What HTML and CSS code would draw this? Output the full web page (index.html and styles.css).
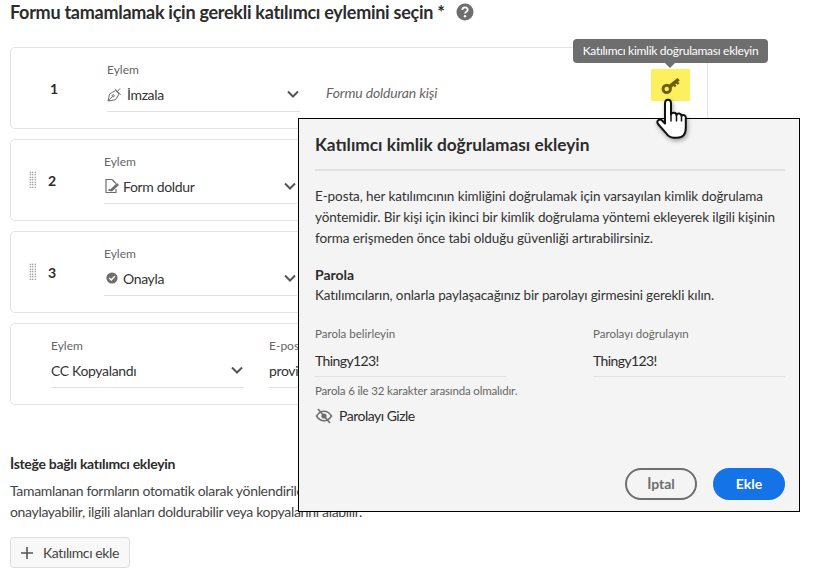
FILE: index.html
```html
<!DOCTYPE html>
<html lang="en">

<head>
    <meta charset="UTF-8">
    <meta name="viewport" content="width=device-width, initial-scale=1.0">
    <title>Katılımcı eylemi</title>
    <link rel="stylesheet" href="styles.css">
</head>

<body>
    <div class="page">
        <div class="title-row">
            <h1>Formu tamamlamak için gerekli katılımcı eylemini seçin *</h1>
            <svg class="help" viewBox="0 0 18 18" width="18" height="18">
                <circle cx="9" cy="9" r="8.5" fill="#6e6e6e" />
                <path d="M6.3 7a2.7 2.6 0 0 1 5.4 0c0 1.8-2.7 1.8-2.7 3.6" fill="none" stroke="#fff" stroke-width="1.8" />
                <circle cx="9" cy="13.3" r="1.2" fill="#fff" />
            </svg>
        </div>

        <div class="card card-first">
            <span class="num">1</span>
            <div class="field">
                <label>Eylem</label>
                <div class="select">
                    <svg class="act-icon" viewBox="0 0 16 16" width="16" height="16">
                        <path d="M1 15 2.600 8 8.500 4.500l3.500 3.600-3.400 5.600zM1 15l4.300-4.300M8 2.800l5.700 5.900M10.500 5.500 13 2.500" fill="none" stroke="#6e6e6e" stroke-width="1" />
                        <circle cx="6.200" cy="9.800" r="1.100" fill="none" stroke="#6e6e6e" />
                    </svg>
                    <span class="select-text">İmzala</span>
                    <svg class="chev" viewBox="0 0 12 8" width="12" height="8"><path d="M1 1.5 6 6.5l5-5" fill="none" stroke="#555" stroke-width="2" /></svg>
                </div>
            </div>
            <em class="who">Formu dolduran kişi</em>
        </div>

        <div class="card">
            <span class="grip"></span>
            <span class="num">2</span>
            <div class="field">
                <label>Eylem</label>
                <div class="select">
                    <svg class="act-icon" viewBox="0 0 16 16" width="16" height="16">
                        <path d="M8 1.5H2v13h10V11M8 1.5l4 4" fill="none" stroke="#6e6e6e" stroke-width="1.2" />
                        <path d="M4 12.5c1-2 1.5-2 2.2-1L13 5l2 2-7 6.5z" fill="#6e6e6e" />
                    </svg>
                    <span class="select-text">Form doldur</span>
                    <svg class="chev" viewBox="0 0 12 8" width="12" height="8"><path d="M1 1.5 6 6.5l5-5" fill="none" stroke="#555" stroke-width="2" /></svg>
                </div>
            </div>
        </div>

        <div class="card">
            <span class="grip"></span>
            <span class="num">3</span>
            <div class="field">
                <label>Eylem</label>
                <div class="select">
                    <svg class="act-icon" viewBox="0 0 16 16" width="16" height="16">
                        <circle cx="8" cy="8" r="5.6" fill="#6e6e6e" />
                        <path d="M5.3 8l2 2 3.5-3.8" fill="none" stroke="#fff" stroke-width="1.5" />
                    </svg>
                    <span class="select-text">Onayla</span>
                    <svg class="chev" viewBox="0 0 12 8" width="12" height="8"><path d="M1 1.5 6 6.5l5-5" fill="none" stroke="#555" stroke-width="2" /></svg>
                </div>
            </div>
        </div>

        <div class="card card-cc">
            <div class="field">
                <label>Eylem</label>
                <div class="select">
                    <span class="select-text">CC Kopyalandı</span>
                    <svg class="chev" viewBox="0 0 12 8" width="12" height="8"><path d="M1 1.5 6 6.5l5-5" fill="none" stroke="#555" stroke-width="2" /></svg>
                </div>
            </div>
            <div class="field field-mail">
                <label>E-pos</label>
                <div class="select"><span class="select-text">provi</span></div>
            </div>
        </div>

        <h2>İsteğe bağlı katılımcı ekleyin</h2>
        <p class="optional">Tamamlanan formların otomatik olarak yönlendirile<br>onaylayabilir, ilgili alanları doldurabilir veya kopyalarını alabilir.</p>
        <button class="add-btn">
            <svg viewBox="0 0 14 14" width="14" height="14"><path d="M7 1v12M1 7h12" stroke="#555" stroke-width="1.6" /></svg>
            Katılımcı ekle
        </button>
    </div>

    <div class="tooltip">Katılımcı kimlik doğrulaması ekleyin</div>
    <div class="key-btn">
        <svg viewBox="0 0 18 18" width="22" height="22">
            <path d="M7 9 14.300 3.200l1.900 2-1.300 1.200 1 1.100-1.400 1.200-1-1-1 .9 1 1.100-1.400 1.200-1-1.100-2.800 2.300z" fill="#6b5f10" />
            <circle cx="5.500" cy="12.200" r="3" fill="none" stroke="#6b5f10" stroke-width="2.400" />
        </svg>
    </div>

    <div class="popover">
        <h3>Katılımcı kimlik doğrulaması ekleyin</h3>
        <p class="intro">E-posta, her katılımcının kimliğini doğrulamak için varsayılan kimlik doğrulama<br>yöntemidir. Bir kişi için ikinci bir kimlik doğrulama yöntemi ekleyerek ilgili kişinin<br>forma erişmeden önce tabi olduğu güvenliği artırabilirsiniz.</p>
        <h4>Parola</h4>
        <p class="sub">Katılımcıların, onlarla paylaşacağınız bir parolayı girmesini gerekli kılın.</p>
        <div class="pw-row">
            <div class="pw-col">
                <label>Parola belirleyin</label>
                <div class="pw-value">Thingy123!</div>
            </div>
            <div class="pw-col">
                <label>Parolayı doğrulayın</label>
                <div class="pw-value">Thingy123!</div>
            </div>
        </div>
        <p class="hint">Parola 6 ile 32 karakter arasında olmalıdır.</p>
        <div class="hide-row">
            <svg viewBox="0 0 18 16" width="18" height="16">
                <path d="M1.500 8c2-3.200 4.500-4.800 7.500-4.800S14.500 4.800 16.500 8c-2 3.200-4.500 4.800-7.500 4.800S3.500 11.200 1.500 8z" fill="none" stroke="#6e6e6e" stroke-width="1.500" />
                <circle cx="9" cy="8" r="2.600" fill="#6e6e6e" />
                <path d="M3 1l12 14" stroke="#6e6e6e" stroke-width="1.600" />
            </svg>
            <span>Parolayı Gizle</span>
        </div>
        <div class="actions">
            <button class="btn-cancel">İptal</button>
            <button class="btn-add">Ekle</button>
        </div>
    </div>

    <svg class="hand" viewBox="0 0 36 46" width="36" height="46">
        <path d="M10 6.500c0-5 6-5 6 0v11c1-2.500 5-2.500 5.500 .5 1-2 4.500-2 5 .8 1.300-1.500 4.300-1 4.300 2v10c0 6-3 10-9 10h-3c-4 0-6-2-8-5L3 27c-2-3 1.500-6 4-3.500l3 3z" fill="#fff" stroke="#111" stroke-width="2" stroke-linejoin="round" />
        <path d="M16 17.500v7M21.500 18v6.500M26.500 19v5.500" stroke="#111" stroke-width="1.500" fill="none" />
    </svg>
</body>

</html>
```
FILE: styles.css
```css
body {
    margin: 0;
    font-family: "Lato", "Noto Sans", sans-serif;
    color: #2c2c2c;
    background: #fff;
    overflow: hidden;
}

.page {
    padding: 1px 0 0 10px;
    width: 697px;
}

.title-row {
    display: flex;
    align-items: center;
    gap: 11px;
    height: 21px;
    margin-bottom: 25px;
}

h1 {
    margin: 0;
    font-size: 18px;
    font-weight: 700;
    letter-spacing: -0.27px;
    white-space: nowrap;
}

.help {
    flex: none;
}

.card {
    display: flex;
    box-sizing: border-box;
    width: 698px;
    height: 82px;
    margin-bottom: 10px;
    padding: 15px 0 0 18px;
    border: 1px solid #e3e3e3;
    border-radius: 5px;
    background: #fff;
}

.card-first {
    padding-left: 39px;
}

.card-first .num {
    width: 57px;
}

.card-first .act-icon {
    margin-right: 4px;
}

.card-cc {
    padding-left: 40px;
    gap: 25px;
}

.grip {
    width: 7px;
    height: 17px;
    margin: 16px 12px 0 0;
    background-image: radial-gradient(#666 0.6px, transparent 0.9px);
    background-size: 2.5px 2.5px;
}

.num {
    width: 56px;
    padding-top: 17px;
    font-size: 14px;
    font-weight: 700;
}

.field {
    width: 193px;
}

.field-mail {
    width: 200px;
}

.field label {
    display: block;
    font-size: 12px;
    line-height: 14px;
    color: #666;
}

.select {
    display: flex;
    align-items: center;
    box-sizing: border-box;
    height: 32px;
    margin-top: 3px;
    padding-bottom: 3px;
    border-bottom: 1px solid #e1e1e1;
    font-size: 14px;
    letter-spacing: -0.35px;
    color: #333;
}

.act-icon {
    flex: none;
    margin-right: 3px;
}

.select-text {
    flex: 1;
    white-space: nowrap;
}

.chev {
    margin-right: 1px;
}

.who {
    margin: 21px 0 0 26px;
    font-size: 14px;
    line-height: 18px;
    letter-spacing: -0.15px;
    color: #666;
}

h2 {
    margin: 49px 0 0;
    font-size: 14px;
    line-height: 20px;
    font-weight: 700;
    letter-spacing: -0.3px;
}

.optional {
    margin: 6px 0 0;
    font-size: 14px;
    line-height: 21px;
    letter-spacing: -0.33px;
    color: #444;
}

.add-btn {
    display: flex;
    align-items: center;
    gap: 9px;
    box-sizing: border-box;
    width: 120px;
    height: 31px;
    margin-top: 15px;
    padding: 0 0 0 9px;
    border: 1px solid #ddd;
    border-radius: 4px;
    background: #f8f8f8;
    font: inherit;
    font-size: 14px;
    letter-spacing: -0.4px;
    color: #444;
}

.tooltip {
    position: absolute;
    left: 573px;
    top: 39px;
    width: 195px;
    height: 24px;
    border-radius: 4px;
    background: #6e6e6e;
    color: #fff;
    font-size: 12px;
    letter-spacing: -0.28px;
    line-height: 24px;
    text-align: center;
}

.tooltip::after {
    content: "";
    position: absolute;
    left: 92px;
    top: 24px;
    border: 5px solid transparent;
    border-top-color: #6e6e6e;
    border-bottom: 0;
}

.key-btn {
    position: absolute;
    left: 651px;
    top: 69px;
    display: flex;
    justify-content: center;
    align-items: center;
    width: 39px;
    height: 32px;
    background: #fdf05e;
}

.popover {
    position: absolute;
    left: 298px;
    top: 118px;
    box-sizing: border-box;
    width: 502px;
    height: 394px;
    padding: 0 14px 0 16px;
    border: 1px solid #000;
    background: #f4f4f4;
}

h3 {
    margin: 0;
    padding: 14px 0 12px;
    font-size: 17.3px;
    line-height: 24px;
    font-weight: 700;
    border-bottom: 2px solid #e2e2e2;
}

.intro {
    margin: 15px 0 0;
    font-size: 13.5px;
    line-height: 21px;
    letter-spacing: -0.1px;
    white-space: nowrap;
    color: #333;
}

h4 {
    margin: 15px 0 0;
    font-size: 14px;
    line-height: 21px;
    font-weight: 700;
}

.sub {
    margin: 0;
    font-size: 13.5px;
    line-height: 21px;
    letter-spacing: -0.13px;
    color: #333;
}

.pw-row {
    display: flex;
    gap: 86px;
    margin-top: 16px;
}

.pw-col {
    width: 192px;
}

.pw-col label {
    font-size: 11.5px;
    line-height: 14px;
    color: #666;
}

.pw-value {
    height: 31px;
    margin-top: 4px;
    border-bottom: 1px solid #e2e2e2;
    font-size: 14px;
    letter-spacing: -0.6px;
    line-height: 32px;
}

.hint {
    margin: 7px 0 0;
    font-size: 11.5px;
    line-height: 14px;
    letter-spacing: -0.16px;
    color: #666;
}

.hide-row {
    display: flex;
    align-items: center;
    gap: 6px;
    margin-top: 8px;
    font-size: 14px;
    letter-spacing: -0.5px;
    line-height: 20px;
}

.actions {
    position: absolute;
    right: 14px;
    bottom: 11px;
    display: flex;
    gap: 16px;
}

.actions button {
    box-sizing: border-box;
    width: 72px;
    height: 32px;
    padding-bottom: 2px;
    border-radius: 16px;
    font: inherit;
    font-size: 14px;
    font-weight: 700;
}

.btn-cancel {
    border: 2px solid #6e6e6e;
    background: transparent;
    color: #6e6e6e;
}

.btn-add {
    border: none;
    background: #1473e6;
    color: #fff;
}

.hand {
    position: absolute;
    left: 655px;
    top: 97px;
    filter: drop-shadow(1px 2px 2px rgba(0, 0, 0, 0.35));
}
```
